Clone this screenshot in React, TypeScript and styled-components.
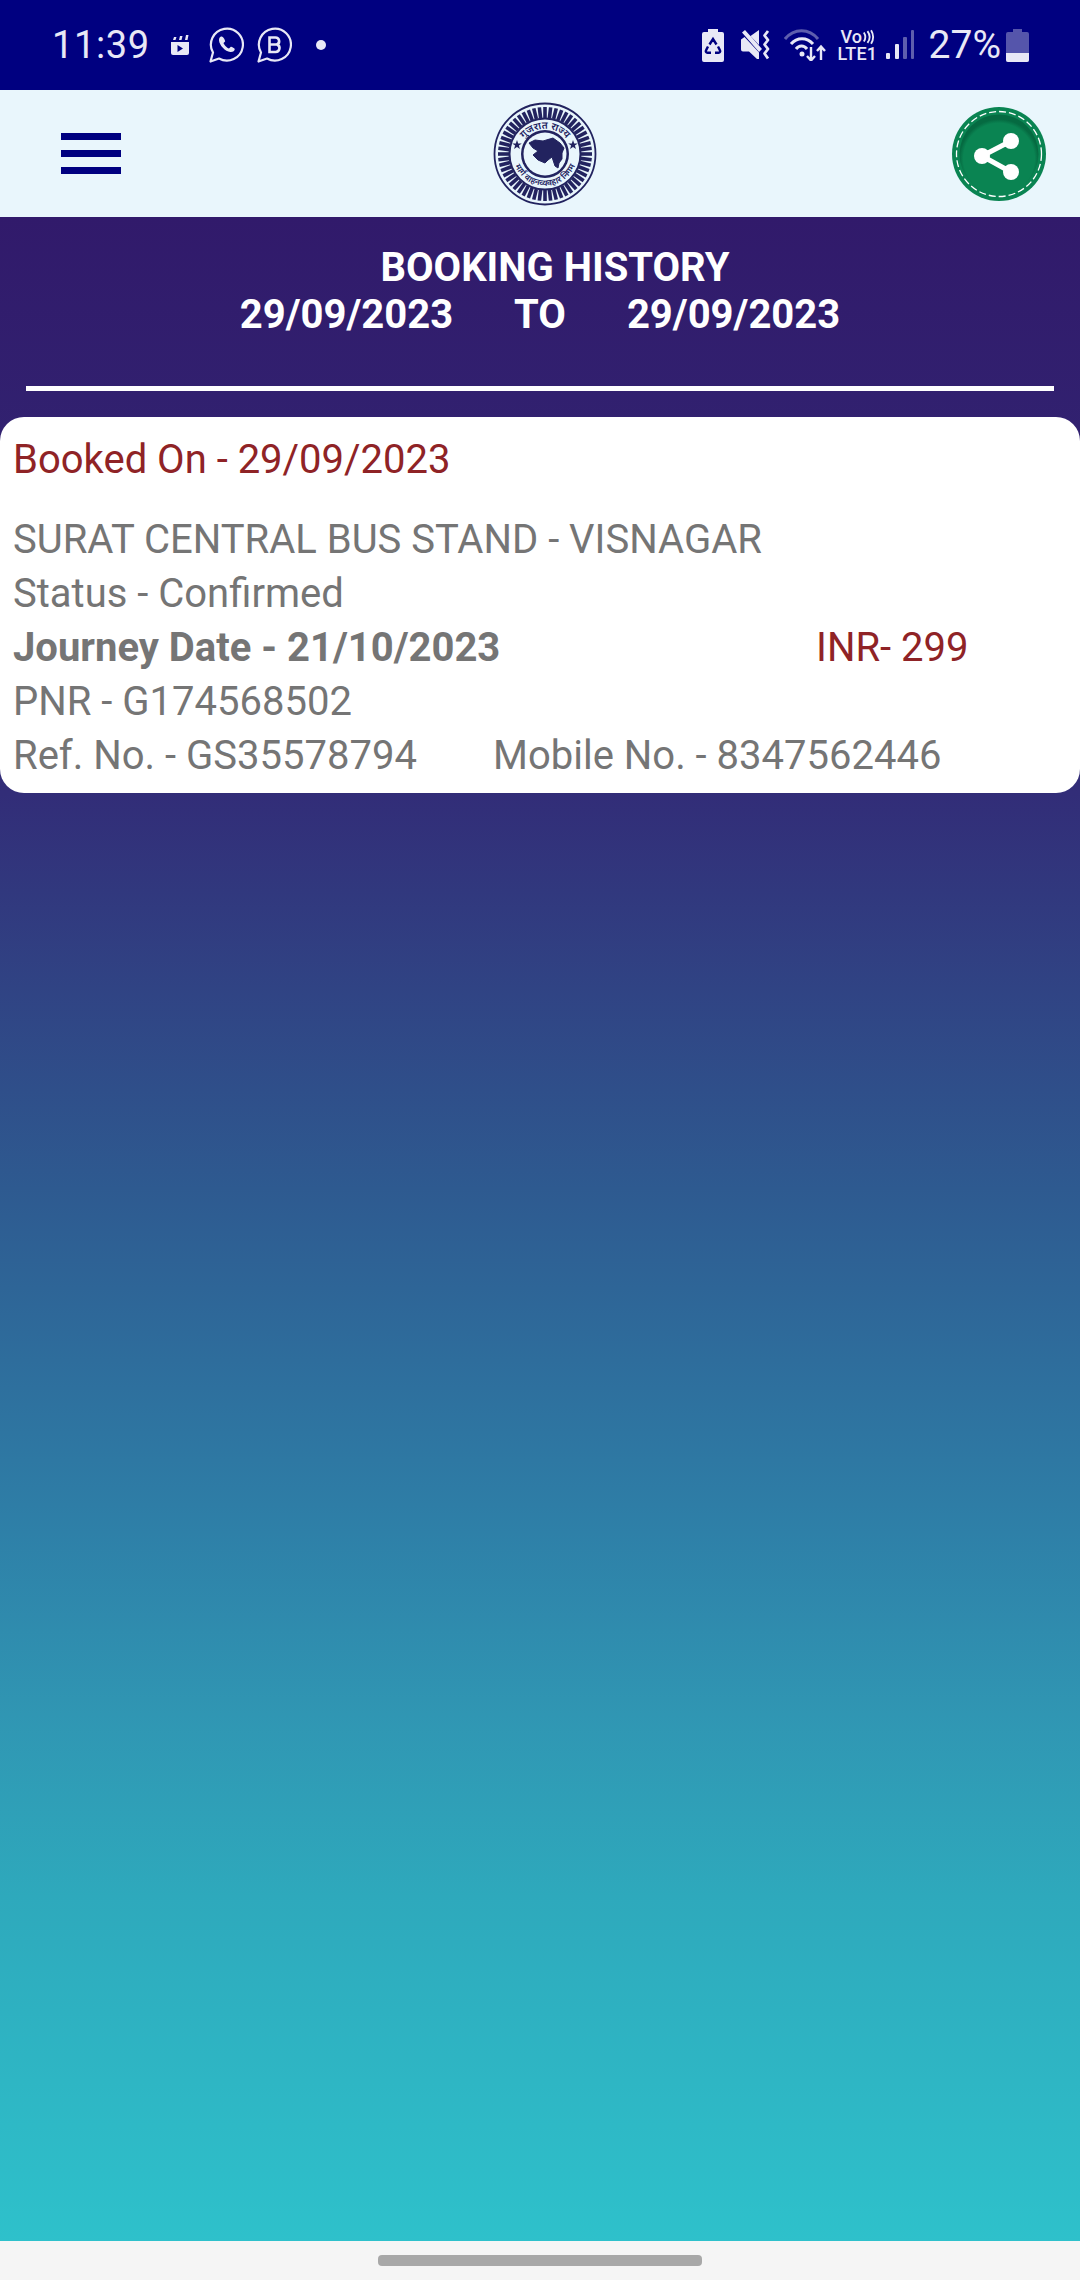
import styled, { createGlobalStyle } from 'styled-components';

const GlobalStyle = createGlobalStyle`
  html, body {
    margin: 0;
    padding: 0;
    background: #f5f5f5;
  }
  body {
    font-family: Roboto, "Liberation Sans", sans-serif;
  }
`;

const Screen = styled.div`
  width: 1080px;
  height: 2280px;
  display: flex;
  flex-direction: column;
  overflow: hidden;
`;

const StatusBar = styled.div`
  height: 90px;
  flex-shrink: 0;
  background: #000080;
  color: #e8e8f6;
  display: flex;
  align-items: center;
  justify-content: space-between;
  padding: 0 51px 0 52px;
  box-sizing: border-box;
`;

const StatusGroup = styled.div`
  display: flex;
  align-items: center;
`;

const Clock = styled.span`
  font-size: 38px;
  line-height: 90px;
  letter-spacing: 0.6px;
  margin-right: 21px;
`;

const Percent = styled.span`
  font-size: 39px;
  line-height: 90px;
  margin: 0 5px 0 15px;
`;

const StatusIcon = styled.svg<{ $gap?: number }>`
  display: block;
  flex-shrink: 0;
  margin-right: ${(p) => p.$gap ?? 0}px;
`;

const Volte = styled.div`
  width: 39px;
  margin-right: 9px;
  font-size: 18px;
  line-height: 17px;
  font-weight: 500;
  white-space: nowrap;
`;

const VolteTop = styled.div`
  display: flex;
  align-items: center;
  padding-left: 3px;
`;

const VolteBottom = styled.div`
  letter-spacing: 0.2px;
`;

const Header = styled.header`
  height: 127px;
  flex-shrink: 0;
  background: #e9f6fc;
  display: grid;
  grid-template-columns: 1fr auto 1fr;
  align-items: center;
  padding: 0 33px 0 43px;
`;

const MenuButton = styled.div`
  display: flex;
  flex-direction: column;
  gap: 10px;
  width: 60px;
  margin: -1px 0 0 18px;
`;

const MenuBar = styled.span`
  display: block;
  height: 7px;
  background: #000080;
`;

const ShareSlot = styled.div`
  display: flex;
  justify-content: flex-end;
`;

const Content = styled.main`
  flex: 1;
  background: linear-gradient(
    180deg,
    #311a6b 0%,
    #322d78 28.5%,
    #2e5a90 48%,
    #2e80a8 65%,
    #3096b3 74%,
    #2ea9bc 83%,
    #2ec1cb 100%
  );
  padding-top: 27px;
`;

const Heading = styled.div`
  color: #ffffff;
  font-size: 40px;
  line-height: 47px;
  font-weight: 700;
  text-align: center;
`;

const HeadingTitle = styled.div`
  padding-left: 30px;
`;

const DateRange = styled.div`
  display: flex;
  justify-content: center;
  gap: 61px;
`;

const Rule = styled.hr`
  height: 5px;
  margin: 48px 26px 26px;
  border: 0;
  background: #ffffff;
`;

const Card = styled.section`
  background: #ffffff;
  border-radius: 24px;
  height: 376px;
  padding: 16px 13px 0;
  box-sizing: border-box;
  font-size: 40px;
  line-height: 54px;
  color: #757575;
`;

const BookedOn = styled.div`
  color: #8f2326;
  margin-bottom: 26px;
`;

const Row = styled.div`
  display: flex;
`;

const Cell = styled.div<{ $width: number }>`
  width: ${(p) => p.$width}px;
  flex-shrink: 0;
`;

const Strong = styled.div`
  font-weight: 700;
`;

const Price = styled.div`
  color: #8f2326;
`;

const NavBar = styled.footer`
  height: 39px;
  flex-shrink: 0;
  background: #f5f5f5;
  display: flex;
  justify-content: center;
  padding-top: 14px;
  box-sizing: border-box;
`;

const NavPill = styled.div`
  width: 324px;
  height: 11px;
  border-radius: 4px;
  background: #a8a8a8;
`;

const ICON = '#e8e8f6';

function ClipIcon() {
  return (
    <StatusIcon $gap={20} width="18" height="20" viewBox="0 0 18 20">
      <path d="M0 7h18v11a2 2 0 0 1-2 2H2a2 2 0 0 1-2-2z" fill={ICON} />
      <path d="M2 5l1-3h2.500l-1 3zM8 5l1-4h2.500l-1 4zM14 5l1-5h2.500l-1 5z" fill={ICON} />
      <path d="M6.500 10l5.500 3.500-5.500 3.500z" fill="#000080" />
    </StatusIcon>
  );
}

function WhatsAppIcon() {
  return (
    <StatusIcon $gap={13} width="35" height="36" viewBox="0 0 35 36">
      <path
        d="M1.500 34.500l2.500-9A16 16 0 1 1 10 31.500z"
        fill="none"
        stroke={ICON}
        strokeWidth="2.200"
        strokeLinejoin="round"
      />
      <path
        d="M12 9.500c-1 .4-2.200 1.800-2 4 .6 5 6 10.800 11.400 11.600 2.600.2 4.200-1.200 4.400-3 0-.8-3.400-2.600-4-2.400l-1.800 1.900c-2-.7-4.900-3.500-5.500-5.500l1.600-1.700c.3-.6-1.500-4.800-3.500-5z"
        fill={ICON}
      />
    </StatusIcon>
  );
}

function BusinessIcon() {
  return (
    <StatusIcon $gap={24} width="35" height="36" viewBox="0 0 35 36">
      <path
        d="M1.500 34.500l2.500-9A16 16 0 1 1 10 31.500z"
        fill="none"
        stroke={ICON}
        strokeWidth="2.200"
        strokeLinejoin="round"
      />
      <path
        d="M12.500 10.500h5.800a3.700 3.700 0 0 1 1.800 7 3.900 3.900 0 0 1-1.500 7.500h-6.100zM12.500 17.500h7"
        fill="none"
        stroke={ICON}
        strokeWidth="2.600"
      />
    </StatusIcon>
  );
}

function DotIcon() {
  return (
    <StatusIcon width="10" height="10" viewBox="0 0 10 10">
      <circle cx="5" cy="5" r="5" fill={ICON} />
    </StatusIcon>
  );
}

function BatterySaverIcon() {
  return (
    <StatusIcon $gap={17} width="22" height="33" viewBox="0 0 22 33">
      <path
        d="M6 0h10v3h4a2 2 0 0 1 2 2v26a2 2 0 0 1-2 2H2a2 2 0 0 1-2-2V5a2 2 0 0 1 2-2h4z"
        fill={ICON}
      />
      <path
        d="M7.500 15.500l3.500-5.500 3.500 5.500M16 17.500l2 3.800a1.600 1.600 0 0 1-1.400 2.400H13M9 23.700H5.400A1.600 1.600 0 0 1 4 21.300l2-3.800"
        stroke="#000080"
        strokeWidth="2.400"
        fill="none"
      />
    </StatusIcon>
  );
}

function MuteIcon() {
  return (
    <StatusIcon $gap={13} width="30" height="30" viewBox="0 0 30 30">
      <path d="M0 9.500L3.500 7 18 22.500V29h-2l-8-7.500H2a2 2 0 0 1-2-2z" fill={ICON} />
      <path d="M9.500 6L18 0v15zM1 2.500L4 0l17 19-3 3z" fill={ICON} />
      <path
        d="M27 1l-3.500 4.500 3.500 4.500-3.500 4.500 3.500 4.500-3.500 4.500 3.500 5"
        fill="none"
        stroke={ICON}
        strokeWidth="2.800"
        strokeLinejoin="round"
      />
    </StatusIcon>
  );
}

function WifiIcon() {
  return (
    <StatusIcon $gap={12} width="42" height="32" viewBox="0 0 42 32">
      <path d="M1 10C10 -1 25 -1 34 10" fill="none" stroke="#5e5eae" strokeWidth="3" />
      <path d="M7 15C13 8 23 8 29 15" fill="none" stroke={ICON} strokeWidth="3" />
      <path d="M12 20c3-4 8-4 11 0" fill="none" stroke={ICON} strokeWidth="3" />
      <circle cx="18" cy="25" r="2.500" fill={ICON} />
      <path d="M27 18v13m-4-4l4 4.500 4-4.500" fill="none" stroke={ICON} strokeWidth="2.400" />
      <path d="M37 31V18m-4 4l4-4.500 4 4.500" fill="none" stroke={ICON} strokeWidth="2.400" />
    </StatusIcon>
  );
}

function VolteIcon() {
  return (
    <Volte>
      <VolteTop>
        Vo
        <svg width="16" height="16" viewBox="0 0 16 16" style={{ display: 'block' }}>
          <path
            d="M2 3c2 3 2 7 0 10M6 1.500c3 4 3 9 0 13M10 .500c3 5 3 10 0 15"
            fill="none"
            stroke={ICON}
            strokeWidth="2"
          />
        </svg>
      </VolteTop>
      <VolteBottom>LTE1</VolteBottom>
    </Volte>
  );
}

function SignalIcon() {
  return (
    <StatusIcon width="28" height="30" viewBox="0 0 28 30">
      <rect x="0" y="23" width="4" height="6" rx="1" fill={ICON} />
      <rect x="9" y="14" width="4" height="15" rx="1" fill={ICON} />
      <rect x="17" y="7" width="4" height="22" rx="1" fill="#5e5eae" />
      <rect x="25" y="0" width="3" height="29" rx="1" fill="#5e5eae" />
    </StatusIcon>
  );
}

function BatteryIcon() {
  return (
    <StatusIcon width="23" height="33" viewBox="0 0 23 33">
      <path
        d="M7 0h9v3h5a2 2 0 0 1 2 2v26a2 2 0 0 1-2 2H2a2 2 0 0 1-2-2V5a2 2 0 0 1 2-2h5z"
        fill="#5555ab"
      />
      <path d="M0 24h23v7a2 2 0 0 1-2 2H2a2 2 0 0 1-2-2z" fill={ICON} />
    </StatusIcon>
  );
}

const LOGO = '#22235f';
const RAYS = Array.from({ length: 52 }, (_, i) => (i * 360) / 52);

function Star({ x, y }: { x: number; y: number }) {
  const pts = Array.from({ length: 10 }, (_, i) => {
    const r = i % 2 === 0 ? 5 : 2;
    const a = (i * Math.PI) / 5 - Math.PI / 2;
    return `${x + r * Math.cos(a)},${y + r * Math.sin(a)}`;
  }).join(' ');
  return <polygon points={pts} fill={LOGO} />;
}

function Logo() {
  return (
    <svg width="104" height="104" viewBox="-52 -52 104 104" style={{ display: 'block' }}>
      <circle r="50.500" fill="none" stroke={LOGO} strokeWidth="1.800" />
      {RAYS.map((deg) => (
        <rect key={deg} x="-1.800" y="-47" width="3.600" height="11" fill={LOGO} transform={`rotate(${deg})`} />
      ))}
      <circle r="35.500" fill="#e9f6fc" stroke={LOGO} strokeWidth="2" />
      <path id="logoTop" d="M-27 -3A27.500 27.500 0 0 1 27 -3" fill="none" />
      <path id="logoBottom" d="M-32 5A32.500 32.500 0 0 0 32 5" fill="none" />
      <text fontSize="10" fontWeight="600" fill={LOGO} fontFamily="Noto Sans, sans-serif">
        <textPath href="#logoTop" startOffset="50%" textAnchor="middle">
          गुजरात राज्य
        </textPath>
      </text>
      <text fontSize="8.500" fontWeight="600" fill={LOGO} fontFamily="Noto Sans, sans-serif">
        <textPath href="#logoBottom" startOffset="50%" textAnchor="middle">
          मार्ग वाहनव्यवहार निगम
        </textPath>
      </text>
      <Star x={-28} y={-9} />
      <Star x={28} y={-9} />
      <circle r="24" fill={LOGO} />
      <circle r="21.500" fill="#e9f6fc" />
      <polygon
        points="-16,-11 -10,-14 -2,-13 8,-16 15,-11 19,-6 17,-1 17,5 14,9 13,14 10,12 8,6 7,3 3,6 0,9 -7,6 -12,1 -7,-3 -12,-6"
        fill={LOGO}
        stroke={LOGO}
        strokeWidth="1"
        strokeLinejoin="round"
      />
    </svg>
  );
}

function ShareBadge() {
  return (
    <svg width="96" height="96" viewBox="0 0 96 96" style={{ display: 'block' }}>
      <defs>
        <radialGradient id="badgeShade" cx="50%" cy="56%" r="50%">
          <stop offset="90%" stopColor="#0a8452" />
          <stop offset="100%" stopColor="#056a41" />
        </radialGradient>
      </defs>
      <circle cx="48" cy="48" r="47" fill="#0a8452" />
      <circle cx="48" cy="48" r="39.500" fill="url(#badgeShade)" />
      <circle cx="48" cy="48" r="42.500" fill="none" stroke="#ffffff" strokeWidth="1.300" strokeDasharray="7 3" />
      <path d="M60 35L31 50l29 16" fill="none" stroke="#ffffff" strokeWidth="5" />
      <circle cx="60" cy="35" r="8" fill="#ffffff" />
      <circle cx="31" cy="50" r="8" fill="#ffffff" />
      <circle cx="60" cy="66" r="8" fill="#ffffff" />
    </svg>
  );
}

export default function App() {
  return (
    <Screen>
      <GlobalStyle />
      <StatusBar>
        <StatusGroup>
          <Clock>11:39</Clock>
          <ClipIcon />
          <WhatsAppIcon />
          <BusinessIcon />
          <DotIcon />
        </StatusGroup>
        <StatusGroup>
          <BatterySaverIcon />
          <MuteIcon />
          <WifiIcon />
          <VolteIcon />
          <SignalIcon />
          <Percent>27%</Percent>
          <BatteryIcon />
        </StatusGroup>
      </StatusBar>
      <Header>
        <MenuButton>
          <MenuBar />
          <MenuBar />
          <MenuBar />
        </MenuButton>
        <Logo />
        <ShareSlot>
          <ShareBadge />
        </ShareSlot>
      </Header>
      <Content>
        <Heading>
          <HeadingTitle>BOOKING HISTORY</HeadingTitle>
          <DateRange>
            <span>29/09/2023</span>
            <span>TO</span>
            <span>29/09/2023</span>
          </DateRange>
        </Heading>
        <Rule />
        <Card>
          <BookedOn>Booked On - 29/09/2023</BookedOn>
          <div>SURAT CENTRAL BUS STAND - VISNAGAR</div>
          <div>Status - Confirmed</div>
          <Row>
            <Cell $width={803}>
              <Strong>Journey Date - 21/10/2023</Strong>
            </Cell>
            <Price>INR- 299</Price>
          </Row>
          <div>PNR - G174568502</div>
          <Row>
            <Cell $width={480}>Ref. No. - GS35578794</Cell>
            <div>Mobile No. - 8347562446</div>
          </Row>
        </Card>
      </Content>
      <NavBar>
        <NavPill />
      </NavBar>
    </Screen>
  );
}
